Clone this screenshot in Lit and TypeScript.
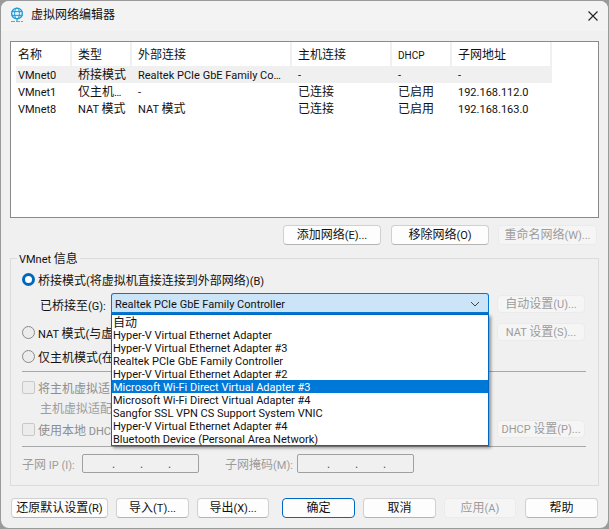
import { LitElement, html, css } from "lit";
import { customElement } from "lit/decorators.js";

const rows = [
  ["VMnet0", "桥接模式", "Realtek PCIe GbE Family Co…", "-", "-", "-"],
  ["VMnet1", "仅主机…", "-", "已连接", "已启用", "192.168.112.0"],
  ["VMnet8", "NAT 模式", "NAT 模式", "已连接", "已启用", "192.168.163.0"],
];
const heads = ["名称", "类型", "外部连接", "主机连接", "DHCP", "子网地址"];
const items = [
  "自动",
  "Hyper-V Virtual Ethernet Adapter",
  "Hyper-V Virtual Ethernet Adapter #3",
  "Realtek PCIe GbE Family Controller",
  "Hyper-V Virtual Ethernet Adapter #2",
  "Microsoft Wi-Fi Direct Virtual Adapter #3",
  "Microsoft Wi-Fi Direct Virtual Adapter #4",
  "Sangfor SSL VPN CS Support System VNIC",
  "Hyper-V Virtual Ethernet Adapter #4",
  "Bluetooth Device (Personal Area Network)",
];

/* Latin runs are set slightly smaller than the CJK runs, as in the reference. */
const t = (s: string) =>
  s.split(/([\x20-\x7e…]+)/).map((part, i) =>
    i % 2 ? html`<span class="l">${part}</span>` : part
  );

@customElement("app-root")
export class AppRoot extends LitElement {
  static styles = css`
    :host {
      display: block;
      width: 609px;
      height: 529px;
      background: #9a9a9a;
      overflow: hidden;
      font-family: Roboto, "Noto Sans CJK SC", sans-serif;
      font-size: 12px;
      color: #111;
    }
    .l { font-size: 11px; white-space: pre; }
    .window {
      width: 607px;
      height: 527px;
      margin: 1px;
      background: #f0f0f0;
      border-radius: 8px;
      overflow: hidden;
      display: flex;
      flex-direction: column;
    }
    .title {
      height: 30px;
      flex: none;
      background: #f3f3f3;
      display: flex;
      align-items: center;
      padding-left: 9px;
      gap: 7px;
    }
    .title .icon { margin-top: -3px; display: block; }
    .title .name { flex: 1; line-height: 29px; height: 30px; }
    .close { margin: 0 10px 1px 0; display: block; }
    .body { padding: 10px 9px 0; display: flex; flex-direction: column; }
    .list {
      height: 177px;
      box-sizing: border-box;
      background: #fff;
      border: 1px solid #8a8a8a;
      padding-left: 5px;
    }
    .grid { display: grid; grid-template-columns: 56px 60px 160px 100px 60px 100px; width: 536px; }
    .head > div {
      height: 24px;
      line-height: 26px;
      box-sizing: border-box;
      border-right: 2px solid #f0f0f0;
      padding-left: 6px;
      white-space: nowrap;
    }
    .head > div:first-child, .row > div:first-child { padding-left: 2px; }
    .head .small .l { font-size: 10px; }
    .row > div { height: 17px; line-height: 19px; padding-left: 6px; white-space: nowrap; }
    .row.sel { background: #f0f0f0; }
    .actions { display: flex; justify-content: flex-end; margin-top: 7px; padding-right: 2px; height: 20px; }
    button {
      font: inherit;
      color: #111;
      background: #fdfdfd;
      border: 1px solid #d0d0d0;
      border-bottom-color: #b4b4b4;
      border-radius: 4px;
      padding: 0;
      height: 20px;
      box-sizing: border-box;
      white-space: nowrap;
      line-height: 17px;
    }
    button[disabled] { background: #f5f5f5; border-color: #ebebeb; color: #9c9c9c; }
    button.primary { border: 1px solid #0067c0; background: #fdfdfd; }
    .w98 { width: 98px; }
    .w99 { width: 99px; margin-left: 9px; }
    .ml10 { margin-left: 10px; }
    .group {
      position: relative;
      margin-top: 13px;
      height: 228px;
      box-sizing: border-box;
      border: 1px solid #dcdcdc;
      padding: 10px 12px 0 11px;
    }
    .legend {
      position: absolute;
      left: 6px;
      top: -8px;
      padding: 0 2px;
      background: #f0f0f0;
      line-height: 17px;
    }
    .line { display: flex; align-items: center; height: 18px; white-space: nowrap; }
    .line .grow { flex: 1; }
    .side { width: 88px; height: 18px; margin: 0 1px 0 8px; flex: none; }
    .r1 { height: 20px; }
    .r2 { height: 21px; margin-top: 4px; }
    .r2 .side { align-self: flex-end; margin-bottom: 1px; }
    .r3 { margin-top: 9px; }
    .r4 { margin-top: 6px; }
    .r5 { margin-top: 6px; }
    .r6 { margin-top: 2px; color: #9c9c9c; padding-left: 18px; }
    .r7 { margin-top: 4px; }
    .off { color: #8e8e8e; }
    .sep { height: 1px; background: #a8a8a8; }
    .s1 { margin-top: 6px; }
    .s2 { margin-top: 8px; }
    .radio {
      width: 13px;
      height: 13px;
      box-sizing: border-box;
      border-radius: 50%;
      border: 1px solid #8a8a8a;
      background: #ececec;
      margin-right: 3px;
      flex: none;
    }
    .radio.on { border: 3.5px solid #0067c0; background: #fff; }
    .check {
      width: 13px;
      height: 13px;
      box-sizing: border-box;
      border: 1px solid #c8c8c8;
      border-radius: 2px;
      background: #ececec;
      margin-right: 3px;
      flex: none;
    }
    .bridge { padding-left: 18px; }
    .bridge label { width: 71px; flex: none; padding-top: 1px; }
    .select {
      width: 378px;
      height: 21px;
      box-sizing: border-box;
      flex: none;
      background: #cce4f7;
      border: 1px solid #0078d4;
      border-bottom-width: 2px;
      border-radius: 3px 3px 0 0;
      padding: 1px 8px 0 3px;
      display: flex;
      align-items: center;
      justify-content: space-between;
    }
    .dropdown {
      position: absolute;
      left: 100px;
      top: 55px;
      width: 378px;
      height: 132px;
      box-sizing: border-box;
      background: #fff;
      border: 1px solid #0067c0;
      box-shadow: 2px 2px 3px rgba(0, 0, 0, 0.4);
    }
    .item { height: 13px; line-height: 14px; padding-left: 1px; white-space: nowrap; }
    .item:first-child { line-height: 16px; }
    .item.hl { background: #0078d7; color: #fff; }
    .subnet { height: 19px; margin-top: 7px; color: #9c9c9c; }
    .subnet .l1 { width: 60px; flex: none; }
    .subnet .l2 { width: 72px; flex: none; margin-left: 26px; }
    .ip {
      width: 117px;
      height: 19px;
      box-sizing: border-box;
      flex: none;
      border: 1px solid #a0a0a0;
      border-radius: 2px;
      background: #f0f0f0;
      padding-left: 2px;
      display: grid;
      grid-template-columns: repeat(3, 28px);
      justify-content: center;
      justify-items: center;
      line-height: 19px;
      color: #555;
    }
    .footer { display: flex; margin-top: 12px; padding-left: 1px; height: 20px; }
    .footer button { width: 73px; margin-left: 8px; }
    .footer .first { width: 97px; margin-left: 0; }
    .footer .narrow { width: 72px; }
    .footer .ok { margin-left: 13px; }
    .footer .help { margin-left: 9px; }
  `;

  render() {
    return html`
      <div class="window">
        <div class="title">
          <svg class="icon" width="14" height="16" viewBox="0 0 14 16" fill="none">
            <circle cx="7" cy="6.5" r="5.4" fill="#dff3fb" stroke="#1f9ad6" stroke-width="1.3"/>
            <ellipse cx="7" cy="6.5" rx="2.4" ry="5.4" stroke="#1f9ad6"/>
            <path d="M1.6 4.6h10.8M1.6 8.4h10.8" stroke="#1f9ad6"/>
            <path d="M7 12v2" stroke="#1f9ad6"/>
            <path d="M1 14.5h12" stroke="#2cc7b0" stroke-width="1.2" stroke-dasharray="4 1"/>
          </svg>
          <span class="name">虚拟网络编辑器</span>
          <svg class="close" width="10" height="10" viewBox="0 0 10 10">
            <path d="M.5.5l9 9M9.5.5l-9 9" stroke="#222" stroke-width="1.1" fill="none"/>
          </svg>
        </div>
        <div class="body">
          <div class="list">
            <div class="grid head">
              ${heads.map((h) => html`<div class=${h === "DHCP" ? "small" : ""}>${t(h)}</div>`)}
            </div>
            ${rows.map(
              (r, i) => html`<div class="grid row ${i === 0 ? "sel" : ""}">
                ${r.map((c) => html`<div>${t(c)}</div>`)}
              </div>`
            )}
          </div>
          <div class="actions">
            <button class="w98">${t("添加网络(E)...")}</button>
            <button class="w98 ml10">${t("移除网络(O)")}</button>
            <button class="w99" disabled>${t("重命名网络(W)...")}</button>
          </div>
          <div class="group">
            <span class="legend">${t("VMnet 信息")}</span>
            <div class="line r1"><span class="radio on"></span><span>${t("桥接模式(将虚拟机直接连接到外部网络)(B)")}</span></div>
            <div class="line r2 bridge">
              <label>${t("已桥接至(G):")}</label>
              <div class="select">
                <span>${t("Realtek PCIe GbE Family Controller")}</span>
                <svg width="10" height="6" viewBox="0 0 10 6"><path d="M1 1l4 4 4-4" fill="none" stroke="#444" stroke-width="1"/></svg>
              </div>
              <button class="side" disabled>${t("自动设置(U)...")}</button>
            </div>
            <div class="line r3">
              <span class="radio"></span><span class="grow">${t("NAT 模式(与虚")}</span>
              <button class="side" disabled>${t("NAT 设置(S)...")}</button>
            </div>
            <div class="line r4"><span class="radio"></span><span>${t("仅主机模式(在")}</span></div>
            <div class="sep s1"></div>
            <div class="line r5 off"><span class="check"></span><span>将主机虚拟适</span></div>
            <div class="line r6"><span>主机虚拟适配</span></div>
            <div class="line r7 off">
              <span class="check"></span><span class="grow">${t("使用本地 DHCP")}</span>
              <button class="side" disabled>${t("DHCP 设置(P)...")}</button>
            </div>
            <div class="sep s2"></div>
            <div class="line subnet">
              <span class="l1">${t("子网 IP (I):")}</span>
              <div class="ip"><span>.</span><span>.</span><span>.</span></div>
              <span class="l2">${t("子网掩码(M):")}</span>
              <div class="ip"><span>.</span><span>.</span><span>.</span></div>
            </div>
            <div class="dropdown">
              ${items.map((s, i) => html`<div class="item ${i === 5 ? "hl" : ""}">${t(s)}</div>`)}
            </div>
          </div>
          <div class="footer">
            <button class="first">${t("还原默认设置(R)")}</button>
            <button>${t("导入(T)...")}</button>
            <button class="narrow">${t("导出(X)...")}</button>
            <button class="ok primary">确定</button>
            <button>取消</button>
            <button class="narrow" disabled>${t("应用(A)")}</button>
            <button class="help">帮助</button>
          </div>
        </div>
      </div>
    `;
  }
}
